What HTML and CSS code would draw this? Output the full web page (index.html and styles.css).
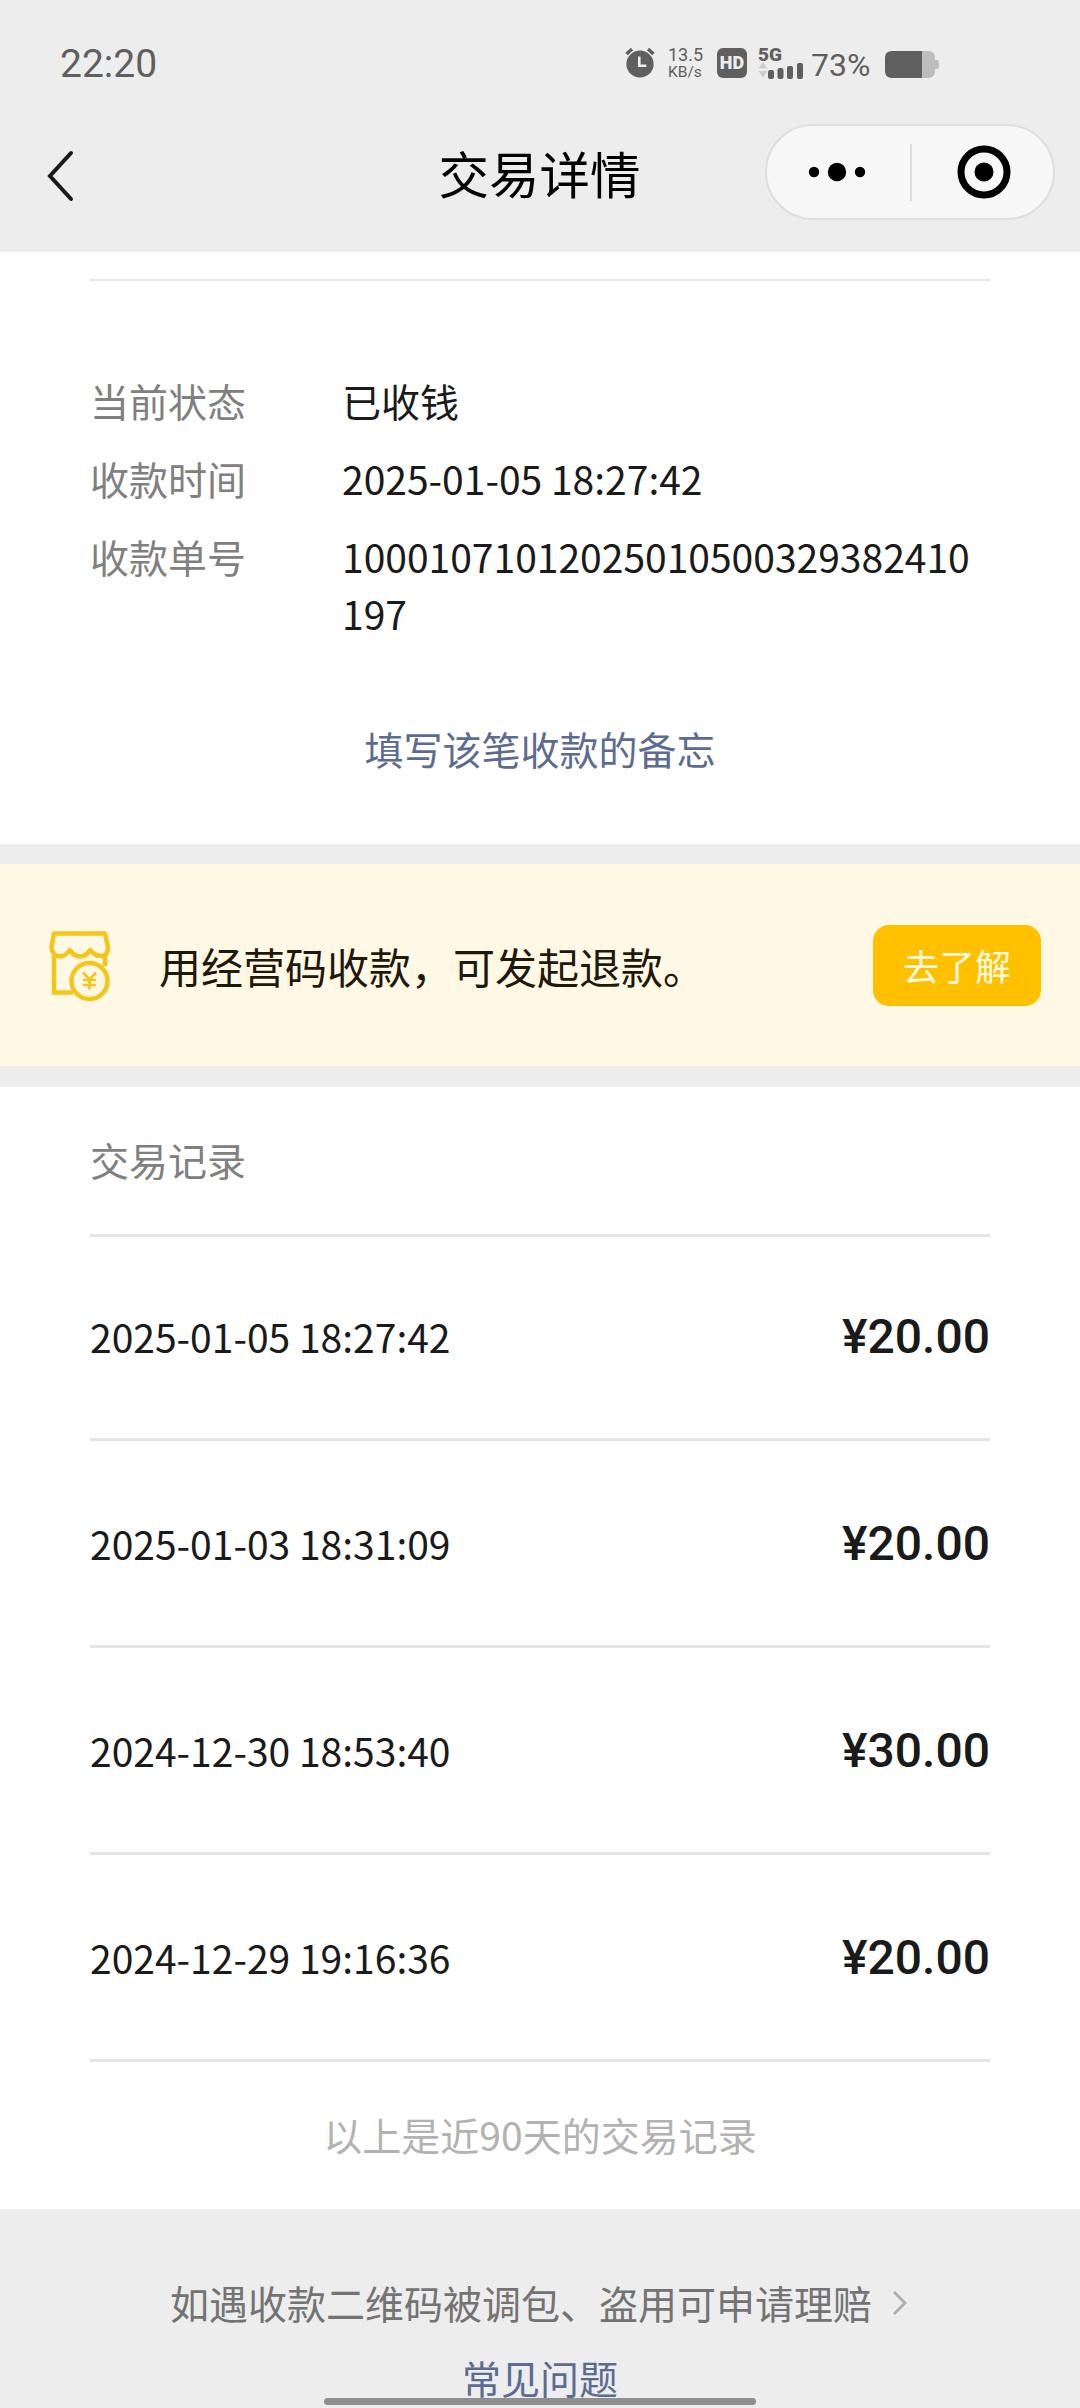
FILE: index.html
```html
<!DOCTYPE html>
<html lang="zh-CN">
<head>
<meta charset="utf-8">
<title>交易详情</title>
<link rel="stylesheet" href="styles.css">
</head>
<body>
<div class="screen">
  <header class="top">
    <div class="status">
      <span class="clock">22:20</span>
      <div class="indicators">
        <svg class="alarm" width="30" height="31" viewBox="0 0 30 31">
          <circle cx="15" cy="17" r="13.6" fill="#5f5f5f"/>
          <path d="M1.5 7 7 2M28.500 7 23 2" stroke="#5f5f5f" stroke-width="3.400" fill="none"/>
          <path d="M14.300 9.500v9.300h7" stroke="#ededed" stroke-width="2.600" fill="none"/>
        </svg>
        <div class="speed"><span>13.5</span><span class="unit">KB/s</span></div>
        <span class="hd">HD</span>
        <div class="signal">
          <span class="gen">5G</span>
          <svg width="46" height="17" viewBox="0 0 46 17">
            <path d="M5 0 9.500 6.500H.5zM5 15.500.5 9h9z" fill="#cdcdcd"/>
            <g fill="#5f5f5f">
              <rect x="10" y="8" width="6" height="9" rx="2"/>
              <rect x="19.500" y="6" width="6" height="11" rx="2"/>
              <rect x="29" y="4" width="6" height="13" rx="2"/>
              <rect x="39" y="1" width="6" height="16" rx="2"/>
            </g>
          </svg>
        </div>
        <span class="percent">73%</span>
        <svg class="battery" width="54" height="27" viewBox="0 0 54 27">
          <path d="M37 0h6q7 0 7 7v2h1.500q2.500 0 2.500 3v3q0 3-2.500 3H50v2q0 7-7 7h-6z" fill="#bdbdbd"/>
          <path d="M37 0v27H7q-7 0-7-7V7q0-7 7-7z" fill="#5f5f5f"/>
        </svg>
      </div>
    </div>
    <div class="nav">
      <svg class="back" width="28" height="54" viewBox="0 0 28 54">
        <path d="M25 4 4 27 25 50" fill="none" stroke="#1a1a1a" stroke-width="4" stroke-linecap="round"/>
      </svg>
      <h1 class="title">交易详情</h1>
      <div class="capsule">
        <svg width="58" height="20" viewBox="0 0 58 20">
          <circle cx="6" cy="10" r="5.200"/><circle cx="29" cy="10" r="9.200"/><circle cx="52" cy="10" r="5.200"/>
        </svg>
        <span class="split"></span>
        <svg width="54" height="54" viewBox="0 0 54 54">
          <circle cx="27" cy="27" r="23" fill="none" stroke="#000" stroke-width="7"/><circle cx="27" cy="27" r="9.500"/>
        </svg>
      </div>
    </div>
  </header>

  <main>
    <section class="details">
      <dl class="facts">
        <dt>当前状态</dt><dd>已收钱</dd>
        <dt>收款时间</dt><dd>2025-01-05 18:27:42</dd>
        <dt>收款单号</dt><dd>10001071012025010500329382410197</dd>
      </dl>
      <a class="memo">填写该笔收款的备忘</a>
    </section>

    <section class="promo">
      <svg class="shop" width="64" height="74" viewBox="0 0 64 74" fill="none" stroke="#f5c518" stroke-width="4.500">
        <path d="M6 4.500H57L60 18Q60 27 54 27Q47 27 42 21Q38 27.500 32 27.500Q26 27.500 22 21Q17 27.500 12 27.500Q4 27 3.500 18Z" stroke-linejoin="round"/>
        <path d="M6 26V63.500H25M57 26V37"/>
        <circle cx="41.500" cy="52" r="18"/>
        <path d="M35 43.500 41.500 50.500 48 43.500M41.500 50.500V60.500M35 51H48M35 56H48" stroke-width="2.600"/>
      </svg>
      <p class="pitch">用经营码收款，可发起退款。</p>
      <button class="learn">去了解</button>
    </section>

    <section class="records">
      <h2 class="heading">交易记录</h2>
      <ul class="list">
        <li><span>2025-01-05 18:27:42</span><b class="amount">¥20.00</b></li>
        <li><span>2025-01-03 18:31:09</span><b class="amount">¥20.00</b></li>
        <li><span>2024-12-30 18:53:40</span><b class="amount">¥30.00</b></li>
        <li><span>2024-12-29 19:16:36</span><b class="amount">¥20.00</b></li>
      </ul>
      <p class="note">以上是近90天的交易记录</p>
    </section>
  </main>

  <footer class="foot">
    <a class="claim">如遇收款二维码被调包、盗用可申请理赔
      <svg width="16" height="28" viewBox="0 0 16 28"><path d="M2 3 13 14 2 25" fill="none" stroke="#adadad" stroke-width="2.800"/></svg>
    </a>
    <a class="faq">常见问题</a>
  </footer>
  <div class="home"></div>
</div>
</body>
</html>
```
FILE: styles.css
```css
* { box-sizing: border-box; margin: 0; padding: 0; }

body {
  width: 1080px;
  background: #ededed;
  color: #1a1a1a;
  font: 39px/57px "Noto Sans CJK SC", sans-serif;
}

.screen { position: relative; height: 2408px; overflow: hidden; }

/* status bar and navigation */
.top { height: 252px; }

.status {
  display: flex;
  justify-content: space-between;
  height: 112px;
  padding: 40px 141px 0 60px;
  color: #5f5f5f;
  font-family: Roboto, sans-serif;
}
.clock { padding-top: 1px; font-size: 39px; line-height: 46px; }
.indicators { display: flex; align-items: flex-start; padding-top: 8px; }
.alarm { margin-top: -1px; }
.speed {
  display: flex;
  flex-direction: column;
  gap: 2px;
  width: 36px;
  margin: -1px 0 0 13px;
  font-size: 18px;
  line-height: 15px;
  white-space: nowrap;
}
.unit { font-size: 15.500px; line-height: 16px; }
.hd {
  width: 30px;
  height: 30px;
  margin-left: 13px;
  border-radius: 6px;
  background: #5f5f5f;
  color: #ededed;
  font-size: 18px;
  font-weight: 900;
  line-height: 30px;
  text-align: center;
}
.signal { display: flex; flex-direction: column; width: 46px; margin-left: 11px; }
.gen { height: 14px; font-size: 19px; font-weight: 900; line-height: 14px; }
.percent { width: 64px; margin-left: 7px; font-size: 32px; line-height: 34px; }
.battery { margin: 3px 0 0 10px; }

.nav {
  display: grid;
  grid-template-columns: 1fr auto 1fr;
  align-items: center;
  height: 120px;
  padding: 0 25px 0 46px;
}
.back { margin-top: 7px; }
.title { margin: 1px 0 0 -22px; font-size: 50.500px; font-weight: 400; line-height: 73px; color: #000; }
.capsule {
  display: flex;
  align-items: center;
  justify-content: space-between;
  justify-self: end;
  width: 290px;
  height: 96px;
  padding: 0 42px 0 41px;
  border: 2px solid #dedede;
  border-radius: 48px;
  background: #f7f7f7;
}
.split { width: 2px; height: 57px; margin-left: 18px; margin-right: 20px; background: #dcdcdc; }

/* transaction details */
.details {
  height: 592px;
  padding: 27px 90px 0;
  background: #fff;
  text-align: center;
}
.facts {
  display: grid;
  grid-template-columns: 252px 1fr;
  row-gap: 21px;
  padding-top: 91px;
  border-top: 2px solid #e8e8e8;
  text-align: left;
}
.facts dt { color: #808080; }
.facts dd { width: 640px; overflow-wrap: anywhere; }
.memo { display: block; margin-top: 78px; color: #5b6c90; }

/* merchant code promotion */
.promo {
  display: flex;
  align-items: center;
  height: 202px;
  margin: 20px 0 21px;
  padding: 0 39px 0 48px;
  background: #fff8e5;
}
.shop { margin-top: 2px; }
.pitch { margin: 0 0 0 47px; font-size: 42px; color: #1f190c; }
.learn {
  width: 168px;
  height: 81px;
  margin-left: auto;
  border: 0;
  border-radius: 16px;
  background: #ffc000;
  color: #fffbe0;
  font: 36px/81px "Noto Sans CJK SC", sans-serif;
}

/* records */
.records { height: 1122px; padding: 44px 90px 0; background: #fff; }
.heading { height: 103px; font-size: 39px; font-weight: 400; color: #808080; }
.list { border-top: 3px solid #e5e5e5; list-style: none; }
.list li {
  display: flex;
  align-items: baseline;
  justify-content: space-between;
  height: 207px;
  padding-top: 74px;
  border-bottom: 3px solid #e5e5e5;
}
.list li:first-child { height: 204px; padding-top: 71px; }
.amount { font-family: Roboto, sans-serif; font-size: 48px; font-weight: 500; }
.note { padding-top: 44px; color: #b2b2b2; text-align: center; }

/* footer */
.foot { padding-top: 65px; text-align: center; }
.claim { display: flex; align-items: center; gap: 20px; padding-left: 170px; color: #737373; }
.faq { display: block; margin-top: 18px; color: #5b6c90; }
.home {
  position: absolute;
  bottom: 3px;
  left: 324px;
  width: 432px;
  height: 7px;
  border-radius: 4px;
  background: #8f8f8f;
}
```
